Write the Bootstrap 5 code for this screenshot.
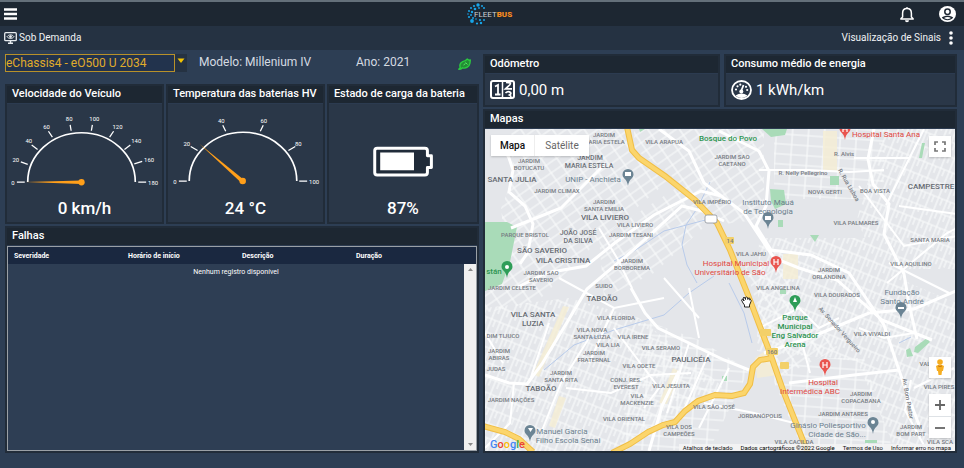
<!DOCTYPE html>
<html lang="pt-BR">
<head>
<meta charset="utf-8">
<meta name="viewport" content="width=device-width, initial-scale=1">
<title>FleetBus</title>
<link rel="stylesheet" href="https://cdn.jsdelivr.net/npm/bootstrap@5.3.0/dist/css/bootstrap.min.css">
<style>
body{background:#2d3e54;color:#fff;font-family:Roboto,"Liberation Sans",sans-serif;font-size:12px;line-height:16px}
svg{display:block}
svg text{font-family:Roboto,"Liberation Sans",sans-serif}
.iconbtn{background:none;border:0;padding:0;color:#fff;display:block}
.topbar{background:#1d2732;border-top:2px solid #64707a;height:26px;padding:0 8px 0 4px}
.topbar>div{flex:1 1 0}
.brand{margin-left:20px}
.subbar{background:#253242;height:24px;padding:0 11px 0 4px;font-size:10px;color:#f0f3f5}
.subbar .gap-label{gap:2px}
.page-main{padding:4px 7px 15px 5px;gap:4px}
.half{flex:1 1 0;min-width:0;gap:2px}
.vehicle{height:28px;margin-bottom:0;color:#d5dbe2}
.vehicle select{width:170px;height:18px;appearance:none;background:#22334d;border:1px solid #b8912a;color:#e0ac2b;font-size:12px;padding:0;line-height:16px;border-radius:0}
.caret{width:12px;height:18px;background:#253242}
.panel{background:#2a3748;border:2px solid #212c39;border-radius:0;color:#fff;min-width:0}
.panel-title{background:#1d2732;height:18px;margin:0;padding:0 5px;font-size:11px;line-height:15px;font-weight:500;white-space:nowrap;border-bottom:1px solid #2c3b50}
.gauges{gap:2px}
.gauges .panel{flex:159 1 0;height:140px}
.gauges .panel:last-child{flex-grow:152}
.gauge-num{font-size:17px;line-height:20px;font-weight:500;text-align:center}
.summary .panel{flex:235 1 0}
.summary .panel:first-child{flex-grow:239}
.readout{font-size:15px;height:31px;gap:4px;padding-left:5px}
.faults{background:linear-gradient(#1a2840 17px,#2e3e54 17px);border:1px solid #9aa0a6}
.faults table{font-size:7px;line-height:8px;margin:0;table-layout:fixed;width:100%}
.faults thead{height:17px}
.faults th,.faults td{padding:4px 6px}
.faults th{font-weight:700}
.scroller{flex:0 0 12px;background:#f0f0f0;padding:4px 0;margin-top:17px}
.map-wrap{position:relative;min-height:322px;background:#e6e8ec;overflow:hidden}
.mapbox>svg{width:100%;height:100%}
.map-ctl{position:absolute;background:#fff;border:0;color:#666;padding:0;box-shadow:0 1px 2px #0003}
.map-type{left:6px;top:6px;width:98px;height:21px}
.map-type button{border:0;background:#fff;color:#666;flex:1 1 0;font-size:10px;padding:0}
.map-type button:first-child{color:#111;font-weight:500;flex-grow:0;flex-basis:44px;border-right:1px solid #eee}
.mc-full{right:4px;top:7px;width:22px;height:21px}
.mc-man{right:4px;bottom:73px;width:22px;height:21px}
.mc-zoom{right:4px;bottom:13px;width:22px;height:44px}
.mc-zoom button{border:0;background:#fff;padding:0;height:22px;width:22px}
.legal{position:absolute;right:0;bottom:0;background:#f5f5f5cc;font-size:6px;line-height:7px;gap:8px;padding:0 4px}
.legal a,.legal button{color:#111;text-decoration:none;background:none;border:0;padding:0}
.mj{stroke:#fff;stroke-width:3;fill:none}
.md{stroke:#fff;stroke-width:2;fill:none}
.hw0{stroke:#f0be45;stroke-width:6;fill:none}
.hw1{stroke:#fbd56c;stroke-width:4;fill:none}
.wat{stroke:#b8cbea;stroke-width:1;fill:none}
.lb text{font-size:6px;fill:#767b82;text-anchor:middle;font-weight:500}
.lb .l8{font-size:8px;fill:#666b72}
.lb .l7{font-size:7px;fill:#6b7077}
.lb .poi{font-size:8px;fill:#6b7f8e;font-weight:400}
.lb .med{fill:#e0463f;font-size:8px;font-weight:400}
.lb .grn{fill:#2c9450;font-size:8px}
</style>
</head>
<body>
<div class="d-flex flex-column min-vh-100">
<header class="topbar d-flex align-items-center">
  <div><button class="iconbtn" aria-label="Menu"><svg width="13" height="12" viewBox="0 0 13 12"><path d="M0 1.5h13M0 6h13M0 10.5h13" stroke="#fff" stroke-width="2.4"/></svg></button></div>
  <a class="brand" href="#" aria-label="FleetBus"><svg width="46" height="22" viewBox="0 0 46 22">
    <g fill="#18a5e8"><circle cx="11" cy="2" r="1.7"/><circle cx="7" cy="3" r="1.1"/><circle cx="15" cy="3" r="1"/><circle cx="4" cy="5" r="1"/><circle cx="8" cy="6" r="1.3"/><circle cx="12" cy="5" r=".9"/><circle cx="17" cy="5" r="1"/><circle cx="2" cy="8" r="1"/><circle cx="5" cy="9" r="1.2"/><circle cx="1" cy="11" r=".8"/><circle cx="4" cy="12" r="1"/><circle cx="2" cy="14" r="1.1"/><circle cx="6" cy="15" r="1"/><circle cx="5" cy="18" r="1.9"/><circle cx="9" cy="16" r=".8"/><circle cx="10" cy="20.500" r="1.1"/><circle cx="13" cy="17" r="1.1"/><circle cx="14" cy="20" r="1.200"/><circle cx="17" cy="17" r="1"/></g>
    <text x="7" y="14" font-size="8" fill="#ccd1d6">FLEET<tspan fill="#f58a1f" font-weight="900">BUS</tspan></text></svg></a>
  <div class="d-flex justify-content-end align-items-center gap-4">
    <button class="iconbtn" aria-label="Notificações"><svg width="16" height="17" viewBox="0 0 16 17"><path d="M2 13V12.500L3.600 11V7.200C3.600 4.500 5.300 2.600 8 2.600S12.400 4.500 12.400 7.200V11L14 12.500V13Z" fill="none" stroke="#fff" stroke-width="1.500"/><path d="M6.800 2.500a1.200 1.200 0 0 1 2.400 0M6 14.300h4a2 2 0 0 1-4 0" fill="#fff"/></svg></button>
    <button class="iconbtn" aria-label="Conta"><svg width="17" height="16" viewBox="0 0 17 16"><ellipse cx="8.500" cy="8" rx="8.500" ry="8" fill="#fff"/><circle cx="8.500" cy="5.800" r="2.700" fill="none" stroke="#1d2732" stroke-width="1.500"/><path d="M2.800 11.500C5.500 9.300 11.500 9.300 14.200 11.500 11.500 15 5.500 15 2.800 11.500Z" fill="#1d2732"/><path d="M5 12c2-1.400 5-1.400 7 0-2 1.500-5 1.500-7 0" fill="#fff"/></svg></button>
  </div>
</header>
<div class="subbar d-flex align-items-center justify-content-between">
  <div class="gap-label d-flex align-items-center"><svg width="13" height="12" viewBox="0 0 13 12" fill="none" stroke="#e8ecef"><rect x=".7" y=".7" width="11.600" height="8" rx="1" stroke-width="1.300"/><path d="M3 4.700c2-2.500 5-2.500 7 0-2 2.500-5 2.500-7 0Z"/><circle cx="6.500" cy="4.700" r="1" fill="#e8ecef"/><path d="M4 11.200h5M6.500 9v2" stroke-width="1.500"/></svg><span>Sob Demanda</span></div>
  <div class="d-flex align-items-center gap-2"><span>Visualização de Sinais</span><button class="iconbtn" aria-label="Opções"><svg width="4" height="14" viewBox="0 0 4 14" fill="#fff"><circle cx="2" cy="2" r="1.800"/><circle cx="2" cy="7" r="1.800"/><circle cx="2" cy="12" r="1.800"/></svg></button></div>
</div>
<main class="page-main d-flex flex-grow-1">
  <section class="half d-flex flex-column">
    <div class="vehicle d-flex align-items-start">
      <select aria-label="Veículo"><option>eChassis4 - eO500 U 2034</option></select>
      <span class="caret"><svg width="12" height="18" viewBox="0 0 12 18"><path d="M2.500 4.500h7L6 9Z" fill="#f5c400"/></svg></span>
      <div class="row g-0 flex-grow-1 ps-2 pe-2">
        <div class="col-7 ps-1">Modelo: Millenium IV</div><div class="col-4">Ano: 2021</div>
        <div class="col-1 d-flex justify-content-end pt-1"><svg width="13" height="12" viewBox="0 0 13 12"><path d="M.8 11.200 2.300 9.500C.8 6 3.500 3.200 7.500 2.600L9.300 1 11 2.200l1.300-.3-.4 3.400C11.300 8.500 8 11 4.500 9.800L3 11Z" fill="#238e35" stroke="#2bc93f" stroke-width="1.400" stroke-linejoin="round"/><path d="m7.500 4.500 2 2M5.500 7l2-1.500" stroke="#56e566" fill="none"/></svg></div>
      </div>
    </div>
    <div class="gauges d-flex">
      <article class="panel"><h2 class="panel-title">Velocidade do Veículo</h2>
        <svg width="100%" height="90" viewBox="6 104 157 90"><path d="M27 182.500a54.500 50 0 0 1 109 0" fill="none" stroke="#fff" stroke-width="1.700"/><path d="M16 182.500h8M20 162l7 2.500M31 145l6 4.500M48 131l4 6M70 124.500l1 6M92.500 124.500l-1 6M114 131l-4 6M131 145l-6 4.500M143 161.500l-8 2.500M139 182.500h8" stroke="#fff" stroke-width="1.300"/><g fill="#fff" font-size="6" text-anchor="middle"><text x="12" y="185">0</text><text x="15" y="162.500">20</text><text x="28" y="143">40</text><text x="46" y="128.500">60</text><text x="69" y="121">80</text><text x="94.500" y="121">100</text><text x="118" y="128.500">120</text><text x="137" y="143">140</text><text x="150" y="162.500">160</text><text x="154" y="185">180</text></g><path d="M25 182.500 81 181v3.500Z" fill="#ff9f1a"/><circle cx="81.500" cy="182.700" r="3.200" fill="#ff9f1a"/></svg>
        <div class="gauge-num pt-1">0 km/h</div></article>
      <article class="panel"><h2 class="panel-title">Temperatura das baterias HV</h2>
        <svg width="100%" height="90" viewBox="166 104 157 90"><path d="M187.500 181.500a54.500 49.500 0 0 1 109 0" fill="none" stroke="#fff" stroke-width="1.700"/><path d="M177 181.500h8M189 146.500l7 4M221.500 125l3 6M262.500 125l-3 6M295 146.500l-7 4M299 181.500h8" stroke="#fff" stroke-width="1.300"/><g fill="#fff" font-size="6" text-anchor="middle"><text x="173" y="184">0</text><text x="185" y="146">20</text><text x="220" y="122.500">40</text><text x="263" y="122.500">60</text><text x="298" y="146">80</text><text x="314" y="184">100</text></g><path d="M198 144 242.500 180l-2.500 3Z" fill="#ff9f1a"/><circle cx="241.700" cy="181.500" r="3.300" fill="#ff9f1a"/></svg>
        <div class="gauge-num pt-1">24 °C</div></article>
      <article class="panel"><h2 class="panel-title">Estado de carga da bateria</h2>
        <svg width="100%" height="90" viewBox="328 104 149 90"><path d="M376.500 148.200h48q2.500 0 2.500 2.500v5h4v12h-4v5q0 2.500-2.500 2.500h-48q-2.500 0-2.500-2.500v-22q0-2.500 2.500-2.500Z" fill="#202b39" stroke="#fff" stroke-width="3" stroke-linejoin="round"/><path d="M379.500 152.500h34v18h-34Z" fill="#fff"/></svg>
        <div class="gauge-num pt-1">87%</div></article>
    </div>
    <article class="panel flex-grow-1 d-flex flex-column"><h2 class="panel-title">Falhas</h2>
      <div class="faults flex-grow-1 d-flex">
        <div class="flex-grow-1"><table><thead><tr><th>Severidade</th><th>Horário de início</th><th>Descrição</th><th>Duração</th></tr></thead><tbody><tr><td colspan="4" class="text-center">Nenhum registro disponível</td></tr></tbody></table></div>
        <div class="scroller d-flex flex-column justify-content-between align-items-center"><svg width="5" height="3" viewBox="0 0 5 3"><path d="M0 3 2.500 0 5 3Z" fill="#888"/></svg><svg width="5" height="3" viewBox="0 0 5 3"><path d="M0 0 2.500 3 5 0Z" fill="#888"/></svg></div>
      </div>
    </article>
  </section>
  <section class="half d-flex flex-column">
    <div class="summary d-flex gap-1">
      <article class="panel"><h2 class="panel-title">Odômetro</h2><div class="readout d-flex align-items-center"><svg width="25" height="19" viewBox="0 0 25 19"><rect x="1" y="1" width="23" height="17" rx="2" fill="#253142" stroke="#fff" stroke-width="2"/><path d="M12.500 1v17" stroke="#fff" stroke-width="1.500"/><path d="M5 6.500 8 5v9.500M5 14.500h5.500" fill="none" stroke="#fff" stroke-width="1.800"/><path d="M16 2.500l4.500.5q0 2-2.500 3.500l-2.500 2.300h6.500M15.500 13q2.500-2.500 5-.5 1 1.500-1 2.500 2 1 1 3" fill="none" stroke="#fff" stroke-width="1.700"/></svg><span>0,00 m</span></div></article>
      <article class="panel"><h2 class="panel-title">Consumo médio de energia</h2><div class="readout d-flex align-items-center"><svg width="21" height="20" viewBox="0 0 21 20"><ellipse cx="10.500" cy="10" rx="9.500" ry="9" fill="#2a3748" stroke="#fff" stroke-width="1.800"/><path d="M4.500 15.500Q10.500 11.500 16.500 15.500 10.500 20.500 4.500 15.500Z" fill="#fff"/><path d="M10 11.500 12.500 5" stroke="#fff" stroke-width="1.800"/><g fill="#fff"><circle cx="10.300" cy="11.500" r="2"/><circle cx="5" cy="9.500" r="1.100"/><circle cx="6.500" cy="6.300" r="1.100"/><circle cx="9.300" cy="4.700" r="1.100"/><circle cx="15" cy="6.800" r="1.100"/><circle cx="16.200" cy="10" r="1.100"/></g></svg><span>1 kWh/km</span></div></article>
    </div>
    <article class="panel flex-grow-1 d-flex flex-column"><h2 class="panel-title">Mapas</h2>
      <div class="map-wrap flex-grow-1 d-flex flex-column">
      <div class="mapbox flex-grow-1 position-relative"><svg class="position-absolute top-0 start-0" viewBox="486 130 470 324" preserveAspectRatio="xMidYMid slice">
        <defs>
          <pattern id="pa" width="13" height="9" patternUnits="userSpaceOnUse" patternTransform="rotate(-35)"><path d="M0 1h13M1 0v9" stroke="#fafbfc" stroke-width="1.100"/></pattern>
          <pattern id="pb" width="9" height="14" patternUnits="userSpaceOnUse" patternTransform="rotate(22)"><path d="M0 1h9M1 0v14M5 1v7" stroke="#fafbfc" stroke-width="1.100"/></pattern>
          <pattern id="pc" width="16" height="10" patternUnits="userSpaceOnUse" patternTransform="rotate(4)"><path d="M0 1h16M1 0v10" stroke="#fafbfc" stroke-width="1.100"/></pattern>
          <g id="pin"><path d="M0 7C-1-1-5.500 0-5.500-4.500a5.500 5.500 0 0 1 11 0C5.500 0 1-1 0 7Z"/></g>
        </defs>
        <path d="M486 129h472v326H486Z" fill="#e4e6ea"/>
        <path d="M512 129h113l14 32 30 22-70 60-60 60-53 12v-20l22-25-6-60 12-30Z" fill="url(#pa)"/>
        <path d="M486 310 570 300 640 320 690 360 725 390 640 440 600 455H486Z" fill="url(#pb)"/>
        <path d="M635 129h130v92l-40 5-60-55-30-20ZM600 240l85-55 30 35-60 55-50 25Z" fill="url(#pa)"/>
        <path d="M775 129h110v72h-110ZM765 360h100l30 95h-90ZM640 320l60 22 50 30-40 80h-90Z" fill="url(#pc)"/>
        <path d="M885 129h73v142h-80l-20-50ZM760 240h110l40 45 48 20v150h-60l-40-92-100-10Z" fill="url(#pb)"/>
        <path d="M745 265h30l25 25-10 20 50 40-60 30Z" fill="url(#pa)"/>
        <path d="M770 350 756 360l2 20 22-3ZM824 133h14v40h-14ZM784 256h15v25h-15ZM534 376l30-68 6 1-30 70ZM550 428l10-30 7 2-11 30ZM660 405l14-35 8 4-14 32Z" fill="#f5eed3" opacity=".8"/>
        <path d="M486 224h22l10 5-7 35-8 22-17 7ZM771 191l14 1 2 14-11 5-4-8ZM831 178h9v9h-9ZM811 237h9l-4 7ZM763 131h25l-2 6-14 2ZM916 349l12-9 3 4-12 11-4-1ZM779 222h5v7h-5ZM923 145h3l-3 15h-3ZM907 352l4-2 3 8-6 1ZM640 131h6l-5 3ZM723 378h5v5h-5ZM781 291h6v5h-6ZM866 442h12v3h-12Z" fill="#a9dbb8"/>
        <path class="wat" d="M711 184l-12 25-12 18-4 20 5 20 10 18M615 263l20-10 30-20 45-12M545 372l30-25 40-15 50-15 25-22 25-17M730 285l15 30 8 30M900 345l12-6"/>
        <path class="mj" d="M505 150l5 10 4 12-4 22 16 14 8 18-5 28-8 12M512 230l25-10 25-10 20-20 25-25M517 290l30-15 40-7 30-24 38-27 35-18 12-6 20 5M486 377l24 8 18 1 15-20 45-75 45-38 50-45 20 5 22 10M632 290l14 25 13 15 66 32 25 10M660 131l30 22 15 32 40 30 30 45 25 10 38 12 45 40 50 20M720 133l40 20 10 20-3 35-10 20 15 24 40 5 38 18 35 52 20 60 15 40M875 131l-6 30 5 25 16 20-5 30 20 40 5 30 8 35M765 355l45-15 60-25 45-4 42-18M790 385l65-8 45-5M650 453l13-45 17-35"/>
        <path class="md" d="M760 172h50l40 2 35-2M855 160h55M860 188l45 60 53-10M925 131l-38 76M900 208l58 8M888 285l60-50 10-5M890 265l60 30M486 335l18 30M515 385l-4 40-25 25M550 325l-20 60M567 390l45 5 40-18 40-2M590 340l-28 45-20 50M615 310l-25 55M615 330l45 60-15 20M690 345l-22 70M710 355l-30 68M730 370l-30 60M600 230l18 30 15 30M560 280l55 30 50-10M803 345l8 30M912 382l-6 30 22 41M955 370l-40 20M705 405l50 10 40 10M860 330l25 10 30-5M760 330l40-20 20 20 20-10M690 290l10 50M665 280l35 40"/>
        <path class="hw0" d="M628 129l5 23 7 8 26 18 30 24 22 23 13 27 18 45 22 58 14 40 24 60M613 455l18-9 18-12 15-7 12-3 10-11 13-10 17-6 17 1 12-3 6-9 3-17 7-7 12-2M484 428l22 6 14 7 14 13"/>
        <path class="hw1" d="M628 129l5 23 7 8 26 18 30 24 22 23 13 27 18 45 22 58 14 40 24 60M613 455l18-9 18-12 15-7 12-3 10-11 13-10 17-6 17 1 12-3 6-9 3-17 7-7 12-2M484 428l22 6 14 7 14 13"/>
        <g fill="#f3d069"><rect x="726" y="239" width="9" height="7" rx="1"/><rect x="761" y="331" width="11" height="7" rx="1"/><rect x="767" y="350" width="12" height="7" rx="1"/><rect x="781" y="364" width="9" height="7" rx="1"/></g>
        <rect x="706" y="217" width="12" height="8" rx="2" fill="#fff" stroke="#8a9099" stroke-width=".8"/>
        <g fill="#6b8494"><use href="#pin" x="629" y="181"/><use href="#pin" x="769" y="224"/><use href="#pin" x="902" y="314"/><use href="#pin" x="874" y="429"/><use href="#pin" x="531" y="437"/></g>
        <g fill="#2e9d58"><use href="#pin" x="508" y="273"/><use href="#pin" x="796" y="307"/></g>
        <g fill="#e9554f"><use href="#pin" x="846" y="135"/><use href="#pin" x="777" y="268"/><use href="#pin" x="826" y="371"/></g>
        <g fill="#fff"><path d="M626 174h6v4h-6ZM766 218h6v4h-6ZM899 309h6v2h-6ZM529 430h5l-2.500 4ZM796 299l2 5h-4Z"/><circle cx="874" cy="424" r="2"/><circle cx="508" cy="269" r="2"/><path d="M844 129v5M848 129v5M844 131h4M775 261v6M779 261v6M775 264h4M824 364v6M828 364v6M824 367h4" stroke="#fff" stroke-width="1.200"/></g>
        <g class="lb">
          <text x="605" y="139">JARDIM</text><text x="605" y="146">MARIA ESTELA</text><text x="665" y="146">VILA ARAPUA</text><text class="grn" x="729" y="143">Bosque do Povo</text>
          <text class="l7" x="591" y="162">JARDIM</text><text class="l7" x="590" y="170">MARIA ESTELA</text><text x="530" y="165">JARDIM</text><text x="530" y="172">BOTUCATU</text><text class="l8" x="513" y="184">SANTA JULIA</text><text class="poi" x="594" y="184">UNIP - Anchieta</text><text x="558" y="195">JARDIM CLIMAX</text>
          <text x="605" y="206">JARDIM</text><text x="605" y="213">SANTA EMILIA</text><text class="l8" x="606" y="222">VILA LIVIERO</text><text x="636" y="229">VILA LIVIERO</text><text x="526" y="239">PARQUE BRISTOL</text><text class="l7" x="579" y="237">JOÃO JOSÉ</text><text class="l7" x="579" y="245">DA SILVA</text><text x="632" y="239">JARDIM TESANI</text>
          <text class="l8" x="543" y="255">SÃO SAVERIO</text><text class="l8" x="564" y="265">VILA CRISTINA</text><text x="633" y="265">JARDIM</text><text x="633" y="272">BORBOREMA</text><text x="542" y="277">JARDIM SAO</text><text x="542" y="284">SAVERIO</text><text x="513" y="292">JARDIM CELESTE</text><text class="grn" x="495" y="276">stán</text><text x="605" y="290">SUIDO</text>
          <text class="l8" x="603" y="303">TABOÃO</text><text class="l8" x="534" y="319">VILA SANTA</text><text class="l8" x="534" y="328">LUZIA</text><text x="617" y="322">VILA FLORIDA</text><text x="593" y="334">VILA NOVA</text><text x="593" y="341">SANTA LUZIA</text><text x="634" y="341">VILA IRENE</text><text x="609" y="349">VILA LIA</text><text x="504" y="340">DIM TIJUCO</text><text x="595" y="357">JARDIM</text><text x="595" y="364">FRATERNAL</text><text x="662" y="352">VILA SERAMO</text><text class="l8" x="692" y="364">PAULICÉIA</text><text x="640" y="370">VILA ODETE</text>
          <text x="500" y="355">JARDIM</text><text x="500" y="362">ABIRAS</text><text x="497" y="373">JUDAS</text><text x="562" y="377">JARDIM</text><text x="562" y="384">SANTA RITA</text><text class="l8" x="542" y="393">TABOÃO</text><text x="627" y="384">CONJ. RES.</text><text x="627" y="391">EVEREST</text><text x="672" y="390">VILA JESUITA</text><text x="512" y="404">JARDIM NAÇÕES</text><text x="638" y="400">VILA</text><text x="638" y="407">MACKENZIE</text><text x="715" y="411">VILA SÃO JOSÉ</text><text x="625" y="423">VILA ORIENTAL</text><text x="680" y="431">VILA DOS</text><text x="680" y="438">CAMPEÕES</text><text class="poi" x="563" y="436">Manuel Garcia</text><text class="poi" x="569" y="445">Filho Escola Senai</text>
          <text class="med" x="887" y="139">Hospital Santa Ana</text><text x="845" y="158">R. Alvis</text><text x="804" y="177">R. Nelly Pellegrino</text><text x="733" y="161">JARDIM SAO</text><text x="733" y="168">CAETANO</text><text x="826" y="196">NOVA GERTI</text><text x="876" y="195">BOA VISTA</text><text class="l8" x="932" y="191">CAMPESTRE</text><text x="713" y="206">VILA IMPÉRIO</text><text class="poi" x="769" y="207">Instituto Mauá</text><text class="poi" x="769" y="216">de Tecnologia</text><text x="857" y="227">VILA PALMARES</text><text x="931" y="244">SANTA MARIA</text><text x="912" y="268">VILA AQUILINO</text><text x="752" y="258">VILA JAHU</text><text class="med" x="737" y="268">Hospital Municipal</text><text class="med" x="731" y="277">Universitário de São</text><text x="830" y="274">JARDIM</text><text x="830" y="281">ORLANDINA</text><text x="779" y="292">VILA ANGELINA</text><text x="838" y="299">VILA DOURADOS</text><text class="poi" x="903" y="297">Fundação</text><text class="poi" x="903" y="306">Santo André</text>
          <text class="grn" x="796" y="322">Parque</text><text class="grn" x="796" y="331">Municipal</text><text class="grn" x="796" y="340">Eng Salvador</text><text class="grn" x="796" y="349">Arena</text><text x="873" y="338">VILA VIVALDI</text><text class="med" x="824" y="387">Hospital</text><text class="med" x="811" y="396">Intermédica ABC</text><text x="862" y="398">JARDIM</text><text x="862" y="405">COPACABANA</text><text x="761" y="420">JORDANÓPOLIS</text><text x="844" y="418">JARDIM ANTARES</text><text class="poi" x="829" y="430">Ginásio Poliesportivo</text><text class="poi" x="838" y="439">Cidade de São...</text><text x="795" y="446">VILA CACILDA</text><text x="912" y="431">JARDIM</text><text x="912" y="438">BOM PART</text><text x="926" y="368">VAL</text><text x="940" y="391">VILA PIRES</text><text x="941" y="446">VILA SCA</text>
          <text transform="translate(839 333) rotate(48)">Av. Senador Vergueiro</text><text transform="translate(907 401) rotate(80)">Av. Bom Pastor</text><text transform="translate(848 188) rotate(60)">R. Rua Lisboa</text><text x="731" y="245" fill="#333">14</text><text x="773" y="356">160</text>
        </g>
        <path d="M744 305l-1.500-3q.5-1.500 2 0l.5 1-1-3q1-1.500 2 0l.5 1.500v-2q1.500-1 2 0l.3 2 .7-1.500q1.500-.5 1.500 1l-.5 1 1-.5q1 .5.500 2l-1.500 3.500v2h-5v-2Z" fill="#fff" stroke="#111" stroke-width=".9"/>
        <text x="491" y="450" font-size="11" font-weight="500"><tspan fill="#4285f4">G</tspan><tspan fill="#ea4335">o</tspan><tspan fill="#fbbc05">o</tspan><tspan fill="#4285f4">g</tspan><tspan fill="#34a853">l</tspan><tspan fill="#ea4335">e</tspan></text>
      </svg></div>
      <div class="map-ctl map-type d-flex"><button>Mapa</button><button>Satélite</button></div>
      <button class="map-ctl mc-full" aria-label="Tela cheia"><svg class="m-auto" width="12" height="11" viewBox="0 0 12 11"><path d="M1 4V1h3M8 1h3v3M11 7v3H8M4 10H1V7" fill="none" stroke="#777" stroke-width="1.700"/></svg></button>
      <button class="map-ctl mc-man" aria-label="Street View"><svg class="m-auto" width="10" height="17" viewBox="0 0 10 17"><circle cx="5" cy="3" r="2.800" fill="#f6ae22"/><path d="M1 7q4-3 8 0l-1 5H7l-.5 4h-3L3 12H2Z" fill="#f6ae22"/><path d="M3 6q2 2 4 0L6.500 8h-3Z" fill="#cb7c12"/></svg></button>
      <div class="map-ctl mc-zoom"><button class="d-block" aria-label="Aumentar"><svg class="m-auto" width="10" height="10" viewBox="0 0 10 10"><path d="M0 5h10M5 0v10" stroke="#666" stroke-width="1.800"/></svg></button><button class="d-block border-top" aria-label="Diminuir"><svg class="m-auto" width="10" height="10" viewBox="0 0 10 10"><path d="M0 5h10" stroke="#666" stroke-width="1.800"/></svg></button></div>
      <div class="legal d-flex"><button>Atalhos de teclado</button><span class="text-black">Dados cartográficos ©2022 Google</span><a href="#">Termos de Uso</a><a href="#">Informar erro no mapa</a></div>
      </div>
    </article>
  </section>
</main>
</div>
<script src="https://cdn.jsdelivr.net/npm/bootstrap@5.3.0/dist/js/bootstrap.bundle.min.js"></script>
</body>
</html>
